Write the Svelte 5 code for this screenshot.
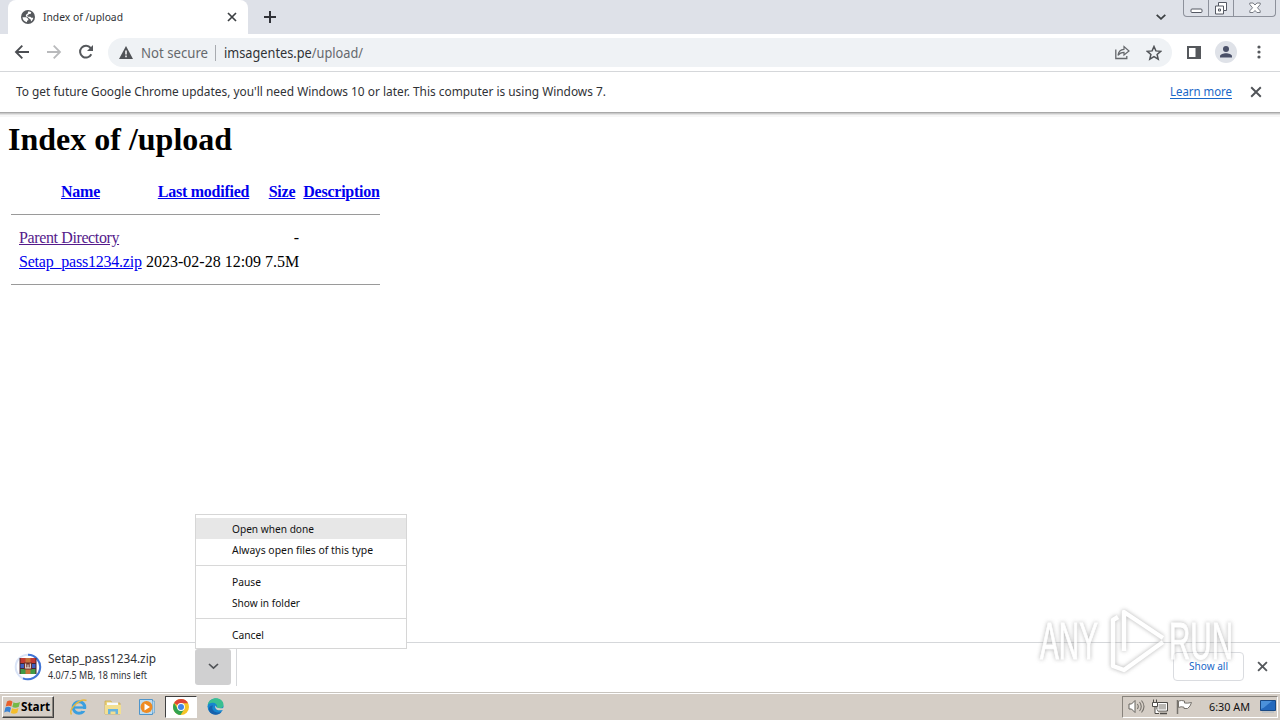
<script>
    const files = [
        { name: 'Parent Directory', modified: '', size: '-', visited: true },
        { name: 'Setap_pass1234.zip', modified: '2023-02-28 12:09', size: '7.5M', visited: false }
    ];
    const columns = ['Name', 'Last modified', 'Size', 'Description'];
    const menuGroups = [
        [{ label: 'Open when done', width: 82 }, { label: 'Always open files of this type', width: 141 }],
        [{ label: 'Pause', width: 29 }, { label: 'Show in folder', width: 68 }],
        [{ label: 'Cancel', width: 32 }]
    ];
    let selected = 'Open when done';
</script>

<!--Tahoma metrics are kept by giving each label its width-->
{#snippet label(text, width, size, cls)}
    <svg class="label {cls}" {width} height="18" style="font-size:{size}px">
        <text x="0" y="13" textLength={width} lengthAdjust="spacingAndGlyphs">{text}</text>
    </svg>
{/snippet}

{#snippet cross(size, color, stroke)}
    <svg width={size} height={size} viewBox="0 0 10 10"><path d="M1 1 9 9M9 1 1 9" stroke={color} stroke-width={stroke} fill="none"/></svg>
{/snippet}

<div class="screen">
    <header class="tabstrip">
        <div class="tab">
            <svg class="globe" width="14" height="14" viewBox="0 0 14 14">
                <circle cx="7" cy="7" r="7" fill="#56595d"/>
                <path d="M1.500 7.300H5.500L7.300 9V10.300L6 10.800V12.300C3.400 11.800 1.600 9.800 1.500 7.300ZM7.200 1.600C8.600 1.600 9.500 2 10.300 2.600L9.500 4H7.800L7.200 5.300 5.800 5.600 7 6.700H9.300L10.400 7.800H12.300C12 9.600 11 11 9.900 11.600V9.800L8.300 8.600 6.500 6.900 4.900 6.400V4.700L6.500 3.700Z" fill="#fff"/>
            </svg>
            {@render label('Index of /upload', 80, 11.5, 'dark')}
            <span class="grow"></span>
            {@render cross(10, '#3c4043', 1.7)}
        </div>
        <svg class="plus" width="12" height="12" viewBox="0 0 12 12"><path d="M6 0v12M0 6h12" stroke="#303238" stroke-width="2"/></svg>
        <span class="grow"></span>
        <svg class="tabsearch" width="10" height="6" viewBox="0 0 10 6"><path d="M.7.8 5 4.800 9.300.8" stroke="#3c4043" stroke-width="1.8" fill="none"/></svg>
        <div class="winbuttons">
            <span><svg width="13" height="14" viewBox="0 0 13 14"><rect x="1" y="8" width="11" height="3.500" rx="1" fill="#fff" stroke="#555963"/></svg></span>
            <span><svg width="14" height="14" viewBox="0 0 14 14"><path d="M4.500 1.500h8v8h-3v3.500h-8v-8h3Z" fill="#fff" stroke="#555963"/><path d="M4.500 5h5v4.500M4.500 8h2v2h-2Z" fill="none" stroke="#555963"/></svg></span>
            <span class="wide"><svg width="12" height="12" viewBox="0 0 12 12"><path d="M.8 1h3.300L6 3 7.900 1h3.300v1.500L8.500 5.800l2.700 3v1.700H7.900L6 8.500l-1.900 2H.8V8.800l2.700-3L.8 2.500Z" fill="#fff" stroke="#6a6e77" stroke-width=".9"/></svg></span>
        </div>
    </header>

    <div class="toolbar">
        <svg class="nav" width="16" height="16" viewBox="0 0 16 16"><path d="M15 8H2M8.300 1.700 2 8l6.300 6.300" stroke="#4b4e52" stroke-width="1.900" fill="none"/></svg>
        <svg class="nav" width="16" height="16" viewBox="0 0 16 16"><path d="M1 8h13M7.700 1.700 14 8l-6.300 6.300" stroke="#b9babc" stroke-width="1.800" fill="none"/></svg>
        <svg class="nav" width="16" height="16" viewBox="0 0 16 16"><path d="M13.300 10.300A5.900 5.900 0 1 1 12.600 4L13.500 5" stroke="#55585c" stroke-width="2" fill="none"/><path d="M15 1v6H9Z" fill="#55585c"/></svg>
        <div class="omnibox">
            <svg width="14" height="13" viewBox="0 0 14 13"><path d="M7 0 14 13H0Z" fill="#505357"/><path d="M7 4.500v4M7 9.600v1.600" stroke="#fff" stroke-width="1.500"/></svg>
            <span class="secure">{@render label('Not secure', 67, 14, 'muted')}</span>
            <span class="divider"></span>
            <svg class="label" width="140" height="18" style="font-size:14px">
                <text x="0" y="14" textLength="139" lengthAdjust="spacingAndGlyphs"><tspan class="dark">imsagentes.pe</tspan><tspan class="muted">/upload/</tspan></text>
            </svg>
            <span class="grow"></span>
            <svg width="15" height="15" viewBox="0 0 15 15"><path d="M.8 4.500v9h11V11" stroke="#65686c" stroke-width="1.300" fill="none"/><path d="M3 10.300C3.500 6.300 6 4.500 9 4.300V1.500L14 6 9 10V7.300C6.500 7.300 4.500 8.200 3 10.300Z" stroke="#65686c" stroke-width="1.200" fill="none"/></svg>
            <svg class="star" width="16" height="16" viewBox="0 0 16 16"><path d="m8 1.500 1.900 4.400 4.800.4-3.600 3.200 1.100 4.700L8 11.700l-4.200 2.500 1.100-4.700L1.300 6.300l4.800-.4Z" stroke="#505357" stroke-width="1.500" fill="none"/></svg>
        </div>
        <svg class="sidepanel" width="14" height="13" viewBox="0 0 14 13"><path d="M1 1h12v11H1Z" fill="#fff" stroke="#55585c" stroke-width="2"/><path d="M8.500 0H14v13H8.500Z" fill="#55585c"/></svg>
        <svg class="avatar" width="22" height="22" viewBox="0 0 22 22"><circle cx="11" cy="11" r="11" fill="#dfe2e8"/><circle cx="11" cy="8" r="3" fill="#4a5068"/><path d="M5 16.500v-1.300c0-2 3.500-3 6-3s6 1 6 3v1.300Z" fill="#4a5068"/></svg>
        <svg class="dots" width="4" height="14" viewBox="0 0 4 14"><circle cx="2" cy="2" r="1.600" fill="#55585c"/><circle cx="2" cy="7" r="1.600" fill="#55585c"/><circle cx="2" cy="12" r="1.600" fill="#55585c"/></svg>
    </div>

    <div class="infobar">
        {@render label("To get future Google Chrome updates, you'll need Windows 10 or later. This computer is using Windows 7.", 590, 12.5, 'dark')}
        <span class="grow"></span>
        <a class="learn" href="#learn">{@render label('Learn more', 62, 12.5, 'blue')}</a>
        {@render cross(12, '#505357', 1.6)}
    </div>

    <main>
        <h1>Index of /upload</h1>
        <div class="row head">
            {#each columns as column}
                <a href="#sort">{column}</a>
            {/each}
        </div>
        <hr>
        {#each files as file}
            <div class="row">
                <span><a class="file" href="#file" class:visited={file.visited}>{file.name}</a></span>
                <span>{file.modified}</span>
                <span class="size">{file.size}</span>
            </div>
        {/each}
        <hr class="last">
    </main>

    <footer class="shelf">
        <svg class="progress" width="28" height="28" viewBox="0 0 28 28">
            <circle cx="14" cy="14" r="12.300" fill="none" stroke="#d9e3f6" stroke-width="2"/>
            <path d="M14 1.700A12.300 12.300 0 1 1 9 25.300" fill="none" stroke="#3f74d6" stroke-width="2"/>
            <path d="M6 5h16v5.500H6Z" fill="#c23a32"/>
            <path d="M6 10.500h16v5H6Z" fill="#3f5fc0"/>
            <path d="M6 15.500h16V21H6Z" fill="#3f9a45"/>
            <path d="M6 10.500h16M6 15.500h16M6 5v16M22 5v16" stroke="#4a2430" stroke-width="1"/>
            <path d="M11.500 5h5v16h-5Z" fill="#c9743a"/>
            <path d="M10 9.500h8v7h-8Z" fill="#6b2f2c"/>
            <path d="M11.700 10.500v4.500h4.600v-4.500M14 11.500v3" fill="none" stroke="#f3e9df" stroke-width="1.100"/>
        </svg>
        <div class="download">
            {@render label('Setap_pass1234.zip', 108, 12.5, 'dark')}
            {@render label('4.0/7.5 MB, 18 mins left', 99, 10.5, 'dark')}
        </div>
        <button class="toggle" aria-label="Download options">
            <svg width="11" height="7" viewBox="0 0 11 7"><path d="m1 1 4.500 4.200L10 1" stroke="#505357" stroke-width="1.700" fill="none"/></svg>
            <div class="menu">
                {#each menuGroups as group}
                    <div class="group">
                        {#each group as item}
                            <div class="item" class:selected={item.label === selected}>
                                {@render label(item.label, item.width, 11.5, 'black')}
                            </div>
                        {/each}
                    </div>
                {/each}
            </div>
        </button>
        <span class="separator"></span>
        <span class="grow"></span>
        <button class="showall">{@render label('Show all', 39, 11.5, 'blue')}</button>
        {@render cross(11, '#55585c', 1.7)}
    </footer>

    <div class="taskbar">
        <div class="start">
            <svg width="17" height="16" viewBox="0 0 17 16">
                <path d="M3 2.500Q6 .6 8.500 2.700L7.300 7.500Q4.800 5.900 1.700 7.500Z" fill="#e9602b"/>
                <path d="M9.500 3.200Q12.500 5 16 3L14.800 7.800Q11.500 9.600 8.300 8Z" fill="#75b947"/>
                <path d="M1.400 8.500Q4.500 6.900 7 8.700L5.800 13.500Q3.500 11.500.2 13.500Z" fill="#3a83d3"/>
                <path d="M8 9.200Q11.400 10.800 14.500 9L13.300 13.800Q10 15.700 6.800 14Z" fill="#f4bd2c"/>
            </svg>
            {@render label('Start', 29, 12, 'strong')}
        </div>
        <div class="pinned">
            <svg width="18" height="18" viewBox="0 0 18 18"><circle cx="9" cy="9.500" r="5.800" fill="none" stroke="#3b9fdf" stroke-width="3"/><path d="M4 9.500h11" stroke="#3b9fdf" stroke-width="2.300"/><path d="M12 11h5v2h-5Z" fill="#d4d0c8"/><path d="M1.500 16.500C-2 11 10 0 16.500 2.500" fill="none" stroke="#e9b83b" stroke-width="1.400"/></svg>
        </div>
        <div class="pinned">
            <svg width="18" height="18" viewBox="0 0 18 18"><path d="M1 3h6l1 2h8v11H1Z" fill="#ead37a" stroke="#c8a84a" stroke-width=".7"/><path d="M3 4.500h11v3H3Z" fill="#f7fbff"/><path d="M1 7h16v9H1Z" fill="#f2df91"/><path d="M4 16v-5h10v5h-2.500v-2.500h-5V16Z" fill="#67b4df"/></svg>
        </div>
        <div class="pinned">
            <svg width="18" height="18" viewBox="0 0 18 18"><path d="M1.500 1.500h13v15h-13Z" fill="#bddcf0" stroke="#4f95cb"/><path d="M14.500 3h2v12h-2" fill="#b7d6eb" stroke="#6aa3cc" stroke-width=".7"/><circle cx="8.500" cy="9" r="6" fill="#ef8b22"/><path d="m6.500 5.500 5.500 3.500-5.500 3.500Z" fill="#fff"/></svg>
        </div>
        <div class="pinned active">
            <svg width="16" height="16" viewBox="0 0 16 16"><circle cx="8" cy="8" r="8" fill="#f5c428"/><path d="M8 8 1.100 4A8 8 0 0 1 15 4.200H8Z" fill="#df4537"/><path d="M1.100 4A8 8 0 0 0 7.500 16L11.300 10 8 8 4.800 10Z" fill="#32a350"/><circle cx="8" cy="8" r="3.900" fill="#fff"/><circle cx="8" cy="8" r="3" fill="#4285e8"/></svg>
        </div>
        <div class="pinned">
            <svg width="17" height="17" viewBox="0 0 17 17"><circle cx="8.500" cy="8.500" r="8" fill="#1686ce"/><path d="M.7 7C2.500-2.200 16.500-1.500 16.500 7c0 3-4 4.300-6.800 2.800C11 7.500 9 5 6 4.800 3.500 4.600 1.400 5.800.7 7Z" fill="#39bf91"/><path d="M6 7.500c-2.500 4 2 8.700 8.300 6.500C12 18 5 17.600 2.500 13.500.7 10 3 7 6 7.500Z" fill="#1761ac"/><path d="M8.500 7.500c-1.500 3 2 5.700 7 4.500l2 1V9.500c-2.500 1-5.500 1-7.600.3Z" fill="#d5d0c8"/></svg>
        </div>
        <span class="grow"></span>
        <div class="tray">
            <svg width="17" height="15" viewBox="0 0 17 15"><path d="M1 5h2.500L7 1.500v12L3.500 10H1Z" fill="#fff" stroke="#65625d"/><path d="M9.300 5q2 2.500 0 5M11.500 3q3.500 4.500 0 9M13.500 1.500q5 6 0 12" fill="none" stroke="#77736d" stroke-width="1.100"/></svg>
            <svg width="17" height="16" viewBox="0 0 17 16"><path d="M5 3.500h10.500v8.500H5Z" fill="#b9b7b3" stroke="#4e4c48"/><path d="M6 4.500h8.500V11H6Z" fill="none" stroke="#fff"/><path d="M8 14.500h7" stroke="#4e4c48" stroke-width="1.500"/><path d="M.5 3.500h5v4h-5ZM1.500 3.500v-3M4.500 3.500v-3M3 8v6.500h4" fill="#fff" stroke="#4e4c48"/></svg>
            <svg width="17" height="16" viewBox="0 0 17 16"><path d="M1.500 1v14" stroke="#77736d" stroke-width="1.500"/><path d="M2.500 2q3-1 6 0v2q3 .5 7-.5-1 4-4 6H8V8.200q-3-1-5.500.3Z" fill="#fff" stroke="#77736d"/></svg>
            <span class="clock">{@render label('6:30 AM', 41, 11.5, 'black')}</span>
            <svg width="16" height="13" viewBox="0 0 16 13"><path d="M.5.500h15v10H.5Z" fill="#2469bd" stroke="#194984"/><path d="M1 1h11L4 7.500 1 9Z" fill="#4b91da"/><path d="M2 12h12" stroke="#a9b6c2"/></svg>
        </div>
    </div>

    <svg class="watermark" width="210" height="76" viewBox="0 0 210 76">
        <text x="8" y="55" textLength="58" lengthAdjust="spacingAndGlyphs">ANY</text>
        <path d="M92 34V8L131 34M92 8v39M131 38 92 66l-11-4V16l5-3"/>
        <text x="137" y="55" textLength="64" lengthAdjust="spacingAndGlyphs">RUN</text>
    </svg>
</div>

<style>
    :global(body) {
        overflow: hidden;
    }
    .screen {
        position: relative;
        width: 1280px;
        height: 720px;
        display: flex;
        flex-direction: column;
        overflow: hidden;
        background: #fff;
        font-family: 'Noto Sans', sans-serif;
    }
    svg {
        display: block;
        flex: none;
    }
    button {
        border: 0;
        padding: 0;
        font: inherit;
    }
    .grow {
        flex: 1;
    }
    .label {
        overflow: visible;
        font-family: 'Noto Sans', sans-serif;
    }
    .dark {
        fill: #303236;
    }
    .muted {
        fill: #66696d;
    }
    .blue {
        fill: #1967c8;
    }
    .black {
        fill: #111;
    }
    .strong {
        fill: #000;
        font-weight: 700;
    }

    /* tab strip */
    .tabstrip {
        height: 34px;
        display: flex;
        align-items: flex-start;
        background: #dee1e8;
    }
    .tab {
        box-sizing: border-box;
        width: 240px;
        height: 34px;
        margin-left: 8px;
        padding: 0 11px 0 13px;
        display: flex;
        align-items: center;
        gap: 8px;
        background: #fff;
        border-radius: 8px 8px 0 0;
    }
    .plus {
        margin: 11px 0 0 16px;
    }
    .tabsearch {
        margin: 14px 17px 0 0;
    }
    .winbuttons {
        box-sizing: border-box;
        width: 93px;
        height: 17px;
        margin-right: 4px;
        display: flex;
        border: 1px solid #8d919b;
        border-top: 0;
        border-radius: 0 0 4px 4px;
    }
    .winbuttons span {
        width: 24px;
        display: flex;
        align-items: center;
        justify-content: center;
        border-right: 1px solid #8d919b;
    }
    .winbuttons .wide {
        flex: 1;
        border-right: 0;
    }

    /* toolbar */
    .toolbar {
        box-sizing: border-box;
        height: 38px;
        padding: 0 0 1px 14px;
        display: flex;
        align-items: center;
        border-bottom: 1px solid #d5d7da;
    }
    .nav {
        margin-right: 16px;
    }
    .omnibox {
        box-sizing: border-box;
        width: 1064px;
        height: 29px;
        margin: 1px 0 0 -2px;
        padding: 0 10px 0 11px;
        display: flex;
        align-items: center;
        border-radius: 15px;
        background: #eff2f5;
    }
    .secure {
        margin: 2px 0 0 8px;
    }
    .divider {
        width: 1px;
        height: 16px;
        margin: 0 8px 0 7px;
        background: #a8abb0;
    }
    .star {
        margin-left: 16px;
    }
    .sidepanel {
        margin-left: 15px;
    }
    .avatar {
        margin-left: 14px;
    }
    .dots {
        margin-left: 20px;
    }

    .infobar {
        height: 40px;
        padding: 0 18px 0 16px;
        display: flex;
        align-items: center;
        border-bottom: 1px solid #a9a9a9;
        box-shadow: 0 1px 0 #c9c9c9, 0 2px 0 #e2e2e2, 0 4px 0 #f6f6f6;
    }
    .learn {
        height: 15px;
        margin-right: 18px;
        margin-top: -3px;
        border-bottom: 1px solid #1967c8;
    }

    /* directory listing */
    main {
        flex: 1;
        font: 16px 'Liberation Serif', serif;
        color: #000;
    }
    h1 {
        margin: 8px 0 0 8px;
        font-size: 32px;
        line-height: 37px;
    }
    .row {
        height: 24px;
        padding-left: 19px;
        display: grid;
        grid-template-columns: 123px 115px 34px 77px;
        column-gap: 4px;
        line-height: 24px;
        white-space: nowrap;
    }
    .head {
        margin-top: 22px;
        text-align: center;
        font-weight: 700;
        letter-spacing: -0.25px;
    }
    main a {
        color: #0000ee;
    }
    .file {
        letter-spacing: -0.22px;
    }
    main .visited {
        color: #551a8b;
        letter-spacing: -0.38px;
    }
    .size {
        text-align: right;
    }
    hr {
        width: 369px;
        height: 1px;
        margin: 10px 0 11px 11px;
        border: 0;
        background: #9a9a9a;
    }
    .last {
        margin: 10px 0 0 11px;
    }

    /* download shelf */
    .shelf {
        box-sizing: border-box;
        height: 50px;
        padding: 0 12px 2px 14px;
        display: flex;
        align-items: center;
        border-top: 1px solid #d5d7da;
    }
    .download {
        width: 147px;
        margin-left: 6px;
    }
    .download :global(.label + .label) {
        margin-top: -2px;
    }
    .toggle {
        position: relative;
        width: 36px;
        height: 36px;
        display: flex;
        align-items: center;
        justify-content: center;
        border-radius: 3px;
        background: #d0d0d1;
    }
    .menu {
        position: absolute;
        left: 0;
        bottom: 36px;
        box-sizing: border-box;
        width: 212px;
        height: 135px;
        padding-top: 3px;
        border: 1px solid #d6d6d6;
        background: #fff;
    }
    .group + .group {
        margin-top: 5px;
        padding-top: 5px;
        border-top: 1px solid #d8d8d8;
    }
    .item {
        box-sizing: border-box;
        height: 21px;
        padding: 1px 0 0 35.5px;
        display: flex;
        align-items: center;
    }
    .selected {
        background: #e7e7e7;
    }
    .separator {
        width: 1px;
        height: 38px;
        margin-left: 5px;
        background: #d5d7da;
    }
    .showall {
        box-sizing: border-box;
        width: 71px;
        height: 29px;
        margin-right: 13px;
        padding: 0 1px 2px 0;
        display: flex;
        align-items: center;
        justify-content: center;
        border: 1px solid #dadce0;
        border-radius: 4px;
        background: #fff;
    }

    /* taskbar */
    .taskbar {
        box-sizing: border-box;
        height: 28px;
        padding: 0 2px 0 2px;
        display: flex;
        align-items: center;
        background: #d5cec6;
        border-top: 1px solid #c8c4be;
        box-shadow: inset 0 1px 0 #fff;
    }
    .start {
        box-sizing: border-box;
        width: 52px;
        height: 22px;
        padding-left: 1px;
        margin-right: 9px;
        display: flex;
        align-items: center;
        border: 1px solid;
        border-color: #fff #404040 #404040 #fff;
        box-shadow: inset -1px -1px 0 #8a857e;
    }
    .pinned {
        box-sizing: border-box;
        width: 32px;
        height: 22px;
        margin-right: 2px;
        display: flex;
        align-items: center;
        justify-content: center;
    }
    .active {
        border: 1px solid;
        border-color: #404040 #fff #fff #404040;
        background: #fff;
    }
    .tray {
        box-sizing: border-box;
        width: 156px;
        height: 22px;
        padding-left: 5px;
        display: flex;
        align-items: center;
        gap: 7px;
        border: 1px solid;
        border-color: #88837c #fff #fff #88837c;
    }
    .clock {
        margin: 0 3px 0 9px;
    }

    .watermark {
        position: absolute;
        left: 1032px;
        top: 604px;
        overflow: visible;
        opacity: 0.75;
        filter: drop-shadow(0 0 2px #999);
        font: 52px 'Liberation Sans', sans-serif;
        fill: #fff;
        stroke: #fff;
        pointer-events: none;
    }
    .watermark path {
        fill: none;
        stroke: #fff;
        stroke-width: 4.5;
        stroke-linejoin: round;
    }
</style>
